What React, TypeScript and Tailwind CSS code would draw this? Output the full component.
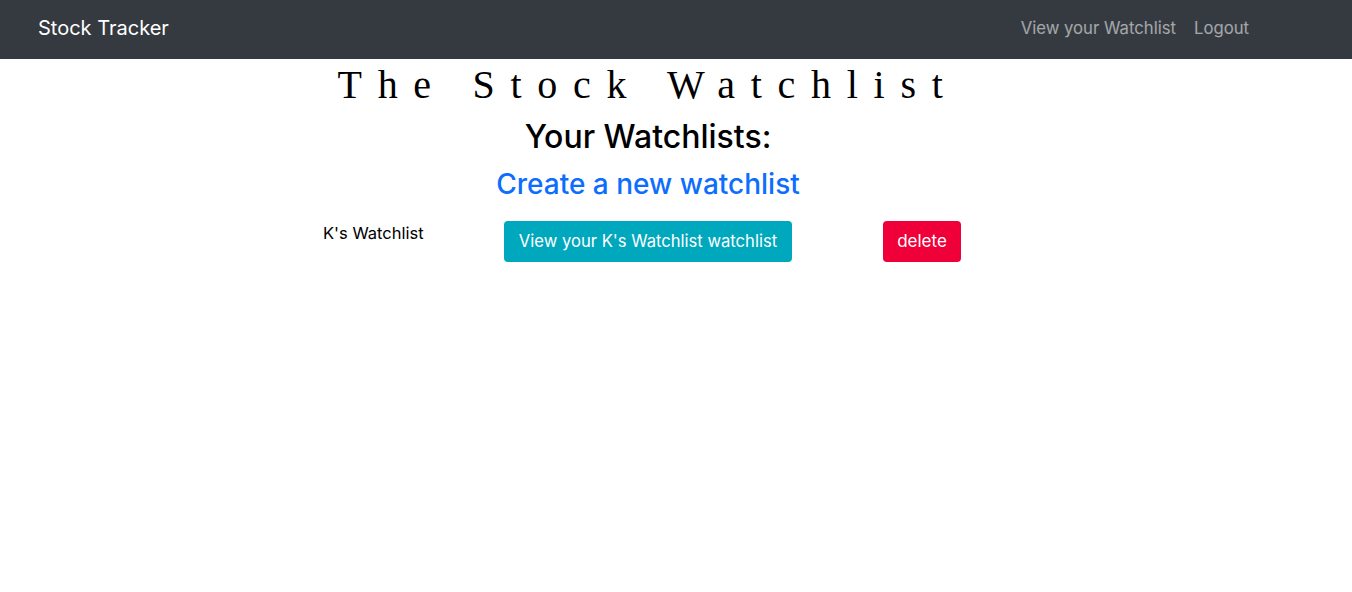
export default function App() {
  const sans = "font-['Inter','Noto_Sans',sans-serif]"
  return (
    <div className={`min-h-[592px] bg-white ${sans}`}>
      {/* Navbar */}
      <nav className="flex h-[59px] items-center justify-between bg-[#343a40] pl-[38px] pr-[94px]">
        <span className="pb-[3px] text-[20px] text-white">Stock Tracker</span>
        <div className="flex items-center pb-[2px] text-[16.7px] text-white/55">
          <a className="px-[9px]">View your Watchlist</a>
          <a className="px-[9px]">Logout</a>
        </div>
      </nav>

      {/* Header block */}
      <div className="flex flex-col items-center pr-[56px]">
        <h1 className="mt-[3px] font-['Liberation_Serif',serif] text-[40px] leading-[46px] tracking-[15.7px] text-black">
          The Stock Watchlist
        </h1>
        <h2 className="mt-[9px] text-[32px] font-medium leading-[40px] text-black">Your Watchlists:</h2>
        <a className="mt-[9px] text-[28px] font-medium leading-[36px] text-[#0d6efd]">Create a new watchlist</a>
      </div>

      {/* Watchlist rows */}
      <div className="mt-[19px] flex items-start pl-[323px]">
        <span className="w-[181px] text-[16.5px] leading-[24px] text-black">K's Watchlist</span>
        <button className="h-[41px] w-[288px] rounded-[4px] bg-[#00a8bd] text-[16.6px] text-white">
          View your K's Watchlist watchlist
        </button>
        <button className="ml-[91px] h-[41px] w-[78px] rounded-[4px] bg-[#ef0039] text-[17px] text-white">
          delete
        </button>
      </div>
    </div>
  )
}
